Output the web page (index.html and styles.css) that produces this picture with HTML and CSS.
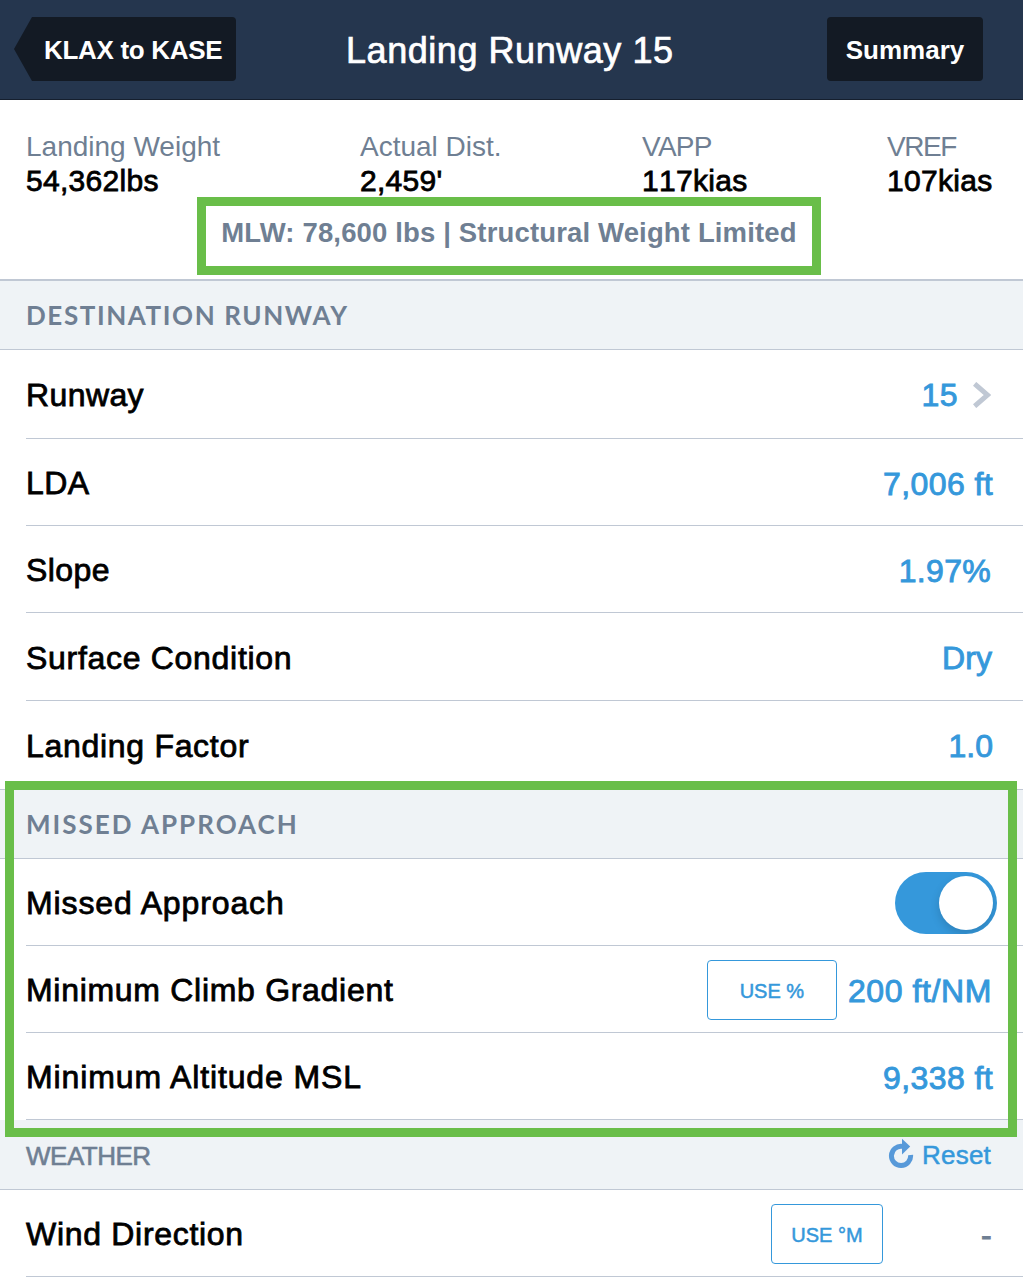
FILE: index.html
```html
<!DOCTYPE html>
<html lang="en">
<head>
<meta charset="utf-8">
<title>Landing Runway 15</title>
<link rel="stylesheet" href="styles.css">
</head>
<body>
<header class="navbar">
  <a class="back"><svg class="back-tip" width="18" height="64" viewBox="0 0 18 64"><path d="M18 0 0 32 18 64Z"/></svg><span class="back-label">KLAX to KASE</span></a>
  <h1 class="title">Landing Runway 15</h1>
  <a class="summary-btn">Summary</a>
</header>
<main>
  <section class="overview">
    <dl class="stats">
      <div class="stat"><dt>Landing Weight</dt><dd>54,362lbs</dd></div>
      <div class="stat"><dt>Actual Dist.</dt><dd>2,459'</dd></div>
      <div class="stat"><dt class="vapp">VAPP</dt><dd>117kias</dd></div>
      <div class="stat"><dt class="vref">VREF</dt><dd>107kias</dd></div>
    </dl>
    <p class="limit">MLW: 78,600 lbs | Structural Weight Limited</p>
  </section>

  <section class="group">
    <h2 class="group-title">DESTINATION RUNWAY</h2>
    <div class="row tall"><span class="label short">Runway</span><span class="value linked">15</span><svg class="chevron" width="18" height="26" viewBox="0 0 18 26"><path d="M1.6 1.8 14.6 13 1.6 24.2"/></svg></div>
    <div class="row"><span class="label short">LDA</span><span class="value">7,006 ft</span></div>
    <div class="row"><span class="label short">Slope</span><span class="value percent">1.97%</span></div>
    <div class="row tall"><span class="label">Surface Condition</span><span class="value plain">Dry</span></div>
    <div class="row tall last"><span class="label">Landing Factor</span><span class="value factor">1.0</span></div>
  </section>

  <section class="group missed">
    <h2 class="group-title missed-title">MISSED APPROACH</h2>
    <div class="row"><span class="label spaced">Missed Approach</span><span class="toggle"><span class="knob"></span></span></div>
    <div class="row"><span class="label">Minimum Climb Gradient</span><button class="unit unit-percent">USE %</button><span class="value wide">200 ft/NM</span></div>
    <div class="row"><span class="label spaced">Minimum Altitude MSL</span><span class="value">9,338 ft</span></div>
    <div class="highlight"></div>
  </section>

  <section class="group">
    <div class="group-title weather-title"><h2 class="weather">WEATHER</h2><a class="reset"><svg width="26" height="30" viewBox="0 0 26 30"><path class="arc" d="M14.5 8.4A9.6 9.6 0 1 0 22.6 17"/><path class="head" d="M14 .8 22.2 8.5 14 16.6Z"/></svg><span>Reset</span></a></div>
    <div class="row"><span class="label">Wind Direction</span><button class="unit unit-mag">USE °M</button><span class="value empty">-</span></div>
  </section>
</main>
</body>
</html>
```
FILE: styles.css
```css
* { box-sizing: border-box; }
body {
  margin: 0;
  width: 1023px;
  height: 1279px;
  overflow: hidden;
  background: #fff;
  color: #000;
  font-family: "Liberation Sans", Arial, sans-serif;
}
h1, h2, p, dl, dd { margin: 0; font-weight: 400; }

.navbar {
  display: grid;
  grid-template-columns: 222px 1fr 156px;
  align-items: start;
  height: 100px;
  padding: 17px 40px 0 14px;
  background: #25364e;
  border-bottom: 1px solid #151f2e;
  color: #fff;
}
.back { display: flex; height: 64px; }
.back-tip { flex: none; fill: #131a24; }
.back-label {
  flex: 1;
  padding-left: 12px;
  border-radius: 0 4px 4px 0;
  background: #131a24;
  font: bold 26px/66px "Liberation Sans", Arial, sans-serif;
  letter-spacing: -0.3px;
  white-space: nowrap;
}
.title {
  padding-left: 110px;
  font-size: 36px;
  line-height: 68px;
  letter-spacing: 0.55px;
  white-space: nowrap;
  -webkit-text-stroke: 0.7px currentColor;
}
.summary-btn {
  height: 64px;
  border-radius: 4px;
  background: #131a24;
  font: bold 26px/66px "Liberation Sans", Arial, sans-serif;
  text-align: center;
}

.overview { height: 181px; padding-top: 30px; border-bottom: 2px solid #c0c8d4; }
.stats {
  display: grid;
  grid-template-columns: 334px 282px 245px 1fr;
  height: 67px;
  padding-left: 26px;
}
.stat dt { color: #6f7f93; font-size: 28px; line-height: 34px; }
.stat .vapp { letter-spacing: -0.7px; }
.stat .vref { letter-spacing: -1.4px; }
.stat dd {
  font-size: 30px;
  line-height: 34px;
  letter-spacing: 0.3px;
  font-kerning: none;
  -webkit-text-stroke: 0.8px currentColor;
}
.limit {
  width: 624px;
  height: 78px;
  margin-left: 197px;
  border: 9px solid #69be49;
  color: #6f7f93;
  font-size: 27.5px;
  font-weight: 700;
  line-height: 54px;
  letter-spacing: 0.15px;
  text-align: center;
  white-space: nowrap;
}

.group { position: relative; }
.group-title {
  height: 69px;
  padding-left: 26px;
  background: #eff3f6;
  border-bottom: 1px solid #c0c8d4;
  color: #6f7f93;
  font: 700 26px/69px Lato, sans-serif;
  letter-spacing: 1.58px;
}
.row {
  display: flex;
  align-items: center;
  height: 87px;
  margin-left: 26px;
  padding-right: 30px;
  border-bottom: 1px solid #c0c8d4;
}
.row.tall { height: 88px; }
.group-title + .row.tall { height: 89px; }
.row.last { height: 89px; margin-left: 0; padding-left: 26px; }
.label {
  margin-right: auto;
  font-size: 32px;
  line-height: 40px;
  padding-top: 2px;
  letter-spacing: 0.7px;
  -webkit-text-stroke: 0.8px currentColor;
}
.label.short { letter-spacing: 0.4px; }
.label.spaced { letter-spacing: 0.88px; }
.value {
  padding-top: 3px;
  color: #3598db;
  font-size: 32px;
  line-height: 40px;
  letter-spacing: 0.4px;
  -webkit-text-stroke: 0.9px currentColor;
}
.value.wide { margin-right: 1px; letter-spacing: 0.6px; }
.value.plain { margin-right: 1px; letter-spacing: 0.1px; }
.value.factor, .value.linked { padding-top: 1px; }
.value.factor { letter-spacing: 0; }
.value.percent { letter-spacing: 0.3px; padding-right: 2px; }
.value.linked { margin-right: 15px; }
.value.empty { width: 109px; margin-right: 1px; color: #6f7f93; text-align: right; }
.chevron { fill: none; stroke: #c0c8d4; stroke-width: 5; margin: 2px 2px 0 0; }

.toggle {
  width: 102px;
  height: 62px;
  margin: 2px -4px 0 0;
  padding: 4px;
  border-radius: 31px;
  background: #3598db;
  overflow: hidden;
}
.knob {
  display: block;
  width: 54px;
  height: 54px;
  margin-left: auto;
  border-radius: 50%;
  background: #fff;
  box-shadow: 0 4px 10px rgba(0, 0, 0, 0.15);
}
.unit {
  height: 60px;
  margin-top: 2px;
  padding: 2px 0 0;
  border: 1px solid #3598db;
  border-radius: 4px;
  background: #fff;
  color: #3598db;
  font: 20px "Liberation Sans", Arial, sans-serif;
  -webkit-text-stroke: 0.5px currentColor;
}
.unit-percent { width: 130px; margin-right: 11px; }
.unit-mag { width: 112px; }

.missed { z-index: 1; }
.missed-title { letter-spacing: 2px; }
.highlight {
  position: absolute;
  left: 5px;
  top: -9px;
  width: 1012px;
  height: 356px;
  border: 9px solid #69be49;
}
.weather-title {
  display: flex;
  justify-content: space-between;
  height: 70px;
  padding-right: 32px;
  font: 26px/72px "Liberation Sans", Arial, sans-serif;
  letter-spacing: 0;
}
.weather { font-size: 26px; letter-spacing: -0.5px; -webkit-text-stroke: 0.6px currentColor; }
.reset { display: flex; gap: 8px; color: #3598db; line-height: 71px; letter-spacing: 0.2px; -webkit-text-stroke: 0.5px currentColor; }
.reset svg { margin-top: 18px; }
.arc { fill: none; stroke: #5799d9; stroke-width: 5; }
.head { fill: #5799d9; stroke: none; }
```
